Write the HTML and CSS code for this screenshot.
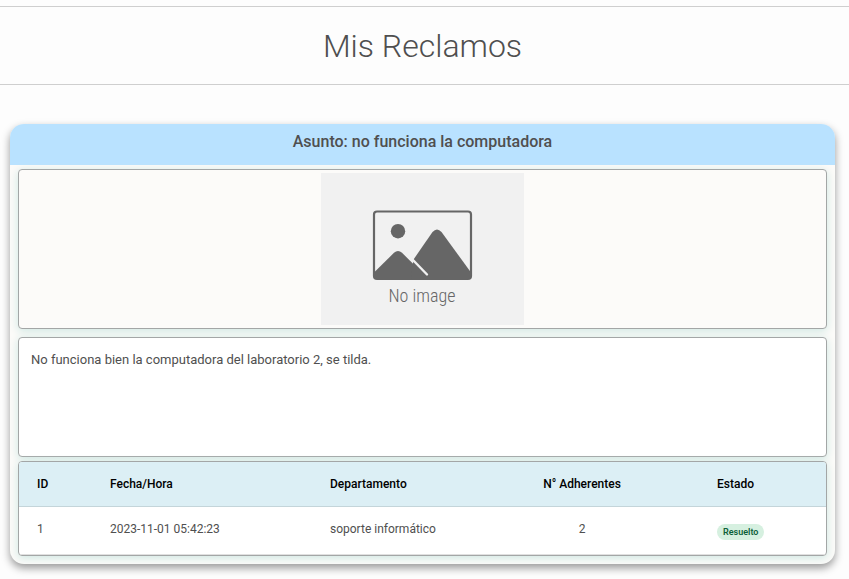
FILE: index.html
```html
<!DOCTYPE html>
<html lang="es">
<head>
<meta charset="utf-8">
<meta name="viewport" content="width=device-width, initial-scale=1">
<title>Mis Reclamos</title>
<link rel="stylesheet" href="styles.css">
</head>
<body>
<header class="page-header">
  <h1 class="page-title">Mis Reclamos</h1>
</header>
<main class="page-main">
  <article class="claim">
    <h2 class="claim-subject">Asunto: no funciona la computadora</h2>
    <div class="claim-body">
      <div class="panel claim-photo">
        <svg class="placeholder" viewBox="0 0 203 152" role="img" aria-label="No image">
          <rect width="203" height="152" fill="#f1f1f1"/>
          <rect x="53" y="38.500" width="97" height="67.500" rx="3" fill="none" stroke="#666" stroke-width="2.200"/>
          <circle cx="77" cy="58.200" r="7.200" fill="#666"/>
          <path d="M53 99.500 L73 79.800 Q77 76 81 79.800 L107 105.500 H56 Q53 105.500 53 102.500 Z" fill="#666"/>
          <path d="M92.500 86.500 L111.500 59 Q116 54 120.500 59 L150 99.500 V102.500 Q150 106 147 106 H90 Z" fill="#666"/>
          <path d="M91.500 86.500 L106 101.500" stroke="#f1f1f1" stroke-width="2.400" stroke-linecap="round"/>
          <text class="placeholder-text" x="101" y="129" text-anchor="middle">No image</text>
        </svg>
      </div>
      <div class="panel claim-text">
        <p>No funciona bien la computadora del laboratorio 2, se tilda.</p>
      </div>
      <div class="panel claim-data">
        <table class="claim-table">
          <thead>
            <tr>
              <th class="col-id" scope="col">ID</th>
              <th class="col-date" scope="col">Fecha/Hora</th>
              <th class="col-dept" scope="col">Departamento</th>
              <th class="col-count" scope="col">N° Adherentes</th>
              <th class="col-state" scope="col">Estado</th>
            </tr>
          </thead>
          <tbody>
            <tr>
              <td>1</td>
              <td>2023-11-01 05:42:23</td>
              <td>soporte informático</td>
              <td class="col-count">2</td>
              <td><span class="badge">Resuelto</span></td>
            </tr>
          </tbody>
        </table>
      </div>
    </div>
  </article>
</main>
</body>
</html>
```

FILE: styles.css
```css
* {
  box-sizing: border-box;
}

body {
  margin: 0;
  padding-top: 6px;
  background: #fdfdfd;
  color: #4f4f4f;
  font-family: Roboto, "Liberation Sans", sans-serif;
}

.page-header {
  padding: 20px 4px 19px 0;
  border-top: 1px solid #cfcfcf;
  border-bottom: 1px solid #cfcfcf;
}

.page-title {
  margin: 0;
  font-size: 32px;
  font-weight: 300;
  line-height: 38px;
  text-align: center;
}

.page-main {
  padding: 39px 14px 15px 10px;
}

.claim {
  overflow: hidden;
  border-radius: 14px;
  background: #fcfbf9;
  box-shadow: 0 4px 8px rgba(0, 0, 0, 0.4);
}

.claim-subject {
  margin: 0;
  padding: 8px 8px 13px;
  background: #b9e2ff;
  font-size: 16px;
  font-weight: 500;
  line-height: 20px;
  text-align: center;
}

.claim-body {
  padding: 4px 8px 8px;
}

.panel {
  border: 1px solid #a3a6a6;
  border-radius: 4px;
  box-shadow: 0 2px 10px #cde6e1;
}

.claim-photo {
  display: flex;
  justify-content: center;
  margin-bottom: 8px;
  padding: 3px;
  background: #fcfbf9;
}

.placeholder {
  width: 203px;
  height: 152px;
}

.placeholder-text {
  fill: #666;
  font-family: "Roboto Condensed", "Liberation Sans Narrow", Roboto, sans-serif;
  font-size: 18px;
  font-weight: 300;
}

.claim-text {
  min-height: 120px;
  margin-bottom: 4px;
  padding: 12px;
  background: #fff;
  font-size: 13px;
  line-height: 20px;
}

.claim-text p {
  margin: 0;
}

.claim-data {
  overflow: hidden;
  background: #fff;
}

.claim-table {
  width: 100%;
  border-collapse: collapse;
  table-layout: fixed;
  font-size: 12px;
  line-height: 16px;
}

.claim-table th,
.claim-table td {
  padding: 14px 18px;
  text-align: left;
  vertical-align: top;
}

.claim-table th {
  border-bottom: 1px solid #c4d5da;
  background: #dceff5;
  color: #000;
  font-weight: 500;
}

.claim-table td {
  height: 48px;
  border-bottom: 1px solid #e0e0e0;
}

.col-id {
  width: 73px;
}

.col-date {
  width: 220px;
}

.col-dept {
  width: 153px;
}

.claim-table .col-count {
  text-align: center;
}

.col-count {
  width: 234px;
}

.col-state {
  width: 127px;
}

.badge {
  display: block;
  width: fit-content;
  margin-top: 3px;
  padding: 3px 6px;
  border-radius: 8px;
  background: #d6f0e0;
  color: #0d6039;
  font-size: 9px;
  font-weight: 600;
  line-height: 10px;
}
```
